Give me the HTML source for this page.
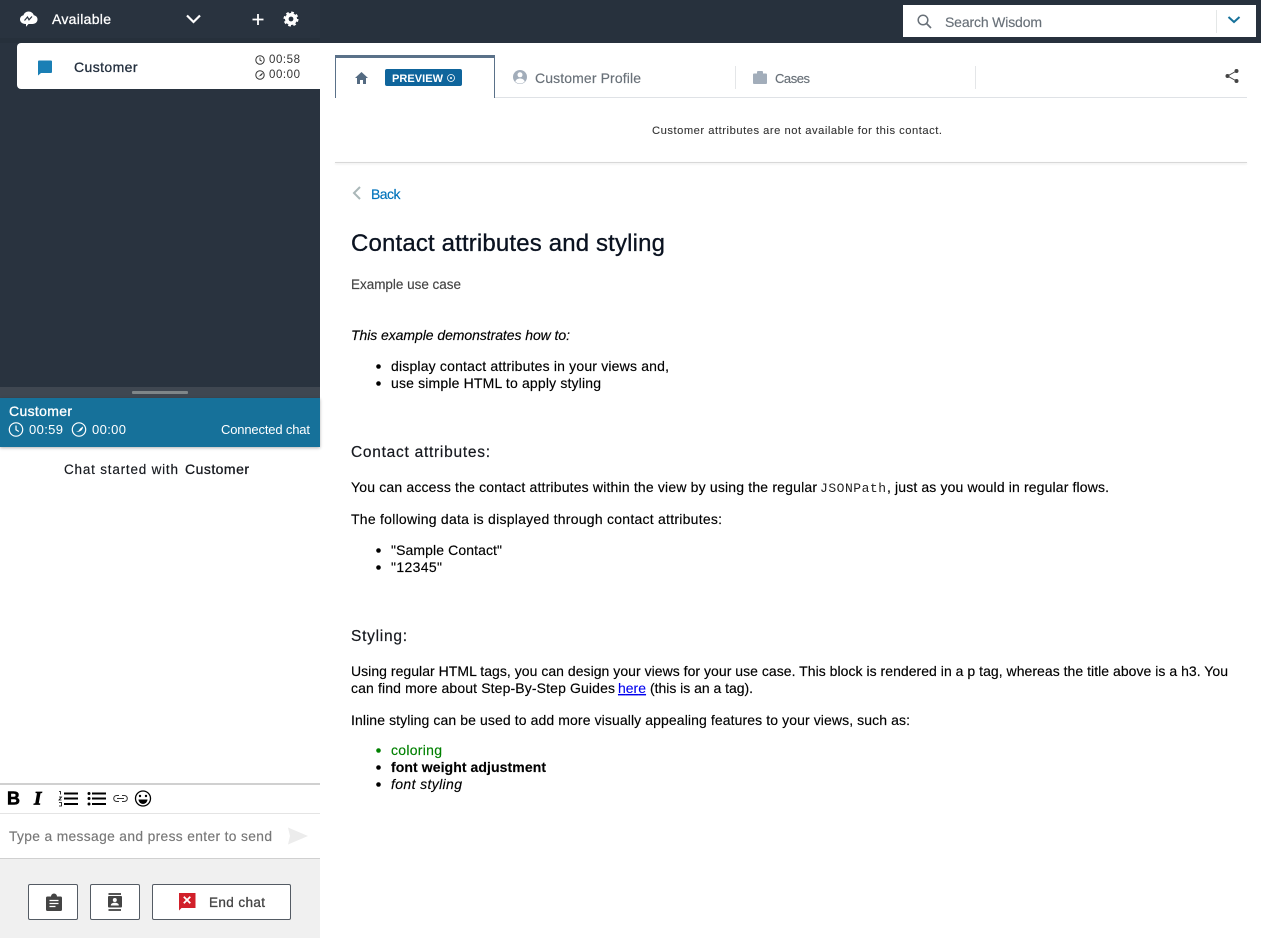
<!DOCTYPE html>
<html lang="en">
<head>
<meta charset="utf-8">
<title>Agent workspace</title>
<style>
html,body{margin:0;padding:0;background:#fff}
body{position:relative;width:1261px;height:938px;overflow:hidden;font-family:"Liberation Sans",sans-serif}
.b{position:absolute;box-sizing:border-box}
svg#t{position:absolute;left:0;top:0}
svg#t text{font-family:"Liberation Sans",sans-serif;white-space:pre}
.m{stroke-width:.3px;paint-order:stroke}
</style>
</head>
<body>
<!-- panels -->
<div class="b" style="left:0;top:0;width:1261px;height:43px;background:#27313d"></div>
<div class="b" style="left:0;top:0;width:320px;height:387px;background:#29333f"></div>
<div class="b" style="left:0;top:38px;width:320px;height:5px;background:#26303b"></div>
<div class="b" style="left:17px;top:43px;width:303px;height:46px;background:#fff;border-radius:4px 0 0 4px"></div>
<div class="b" style="left:903px;top:5px;width:353px;height:32px;background:#fff"></div>
<div class="b" style="left:1216px;top:10px;width:1px;height:23px;background:#e4e7e7"></div>
<div class="b" style="left:0;top:387px;width:320px;height:11px;background:#3f4751"></div>
<div class="b" style="left:132px;top:391px;width:56px;height:3px;background:#7f8689;border-radius:1px"></div>
<div class="b" style="left:0;top:398px;width:320px;height:49px;background:#16719a;box-shadow:0 1px 3px rgba(0,0,0,.3)"></div>
<div class="b" style="left:0;top:783px;width:320px;height:2px;background:#d0d0d0"></div>
<div class="b" style="left:0;top:813px;width:320px;height:1px;background:#e4e4e4"></div>
<div class="b" style="left:0;top:858px;width:320px;height:80px;background:#f0f0f0;border-top:1px solid #d0d0d0"></div>
<div class="b" style="left:28px;top:884px;width:50px;height:36px;background:#fff;border:1px solid #545b64;border-radius:2px"></div>
<div class="b" style="left:90px;top:884px;width:50px;height:36px;background:#fff;border:1px solid #545b64;border-radius:2px"></div>
<div class="b" style="left:152px;top:884px;width:139px;height:36px;background:#fff;border:1px solid #545b64;border-radius:2px"></div>
<!-- tabs -->
<div class="b" style="left:495px;top:97px;width:752px;height:1px;background:#dfe2e6"></div>
<div class="b" style="left:335px;top:55px;width:160px;height:43px;background:#fff;border:1px solid #5a7189;border-top:3px solid #5a7189;border-bottom:0"></div>
<div class="b" style="left:385px;top:69px;width:77px;height:17px;background:#0f659c;border-radius:2px"></div>
<div class="b" style="left:735px;top:66px;width:1px;height:23px;background:#e4e6e8"></div>
<div class="b" style="left:975px;top:66px;width:1px;height:23px;background:#e4e6e8"></div>
<div class="b" style="left:335px;top:162px;width:912px;height:1px;background:#d8d8d8;box-shadow:0 1px 2px rgba(0,0,0,.12)"></div>

<svg id="t" width="1261" height="938" viewBox="0 0 1261 938" xmlns="http://www.w3.org/2000/svg">
<!-- top bar icons -->
<path d="M25.500 24c-3 0-5.500-1.800-5.500-4.600 0-2.200 1.500-3.800 3.500-4.200.7-2.300 2.800-3.700 5-3.700 2.600 0 4.700 1.600 5.300 3.800 2 .3 3.700 1.800 3.700 4.100 0 2.700-2.200 4.600-5.200 4.600h-3.800l-2.500 2.700v-2.700z" fill="#fff"/>
<path d="M24.500 20.500l3-3.500 1.500 2.800 3-3.300" stroke="#29333f" stroke-width="1.200" fill="none"/>
<path d="M187 15.500l6.500 6.500 6.500-6.500" stroke="#fff" stroke-width="2.200" fill="none"/>
<path d="M258 14v11M252.500 19.500h11" stroke="#fff" stroke-width="1.800" fill="none"/>
<circle cx="291" cy="19" r="6" fill="#fff"/>
<circle cx="291" cy="19" r="6.500" fill="none" stroke="#fff" stroke-width="2" stroke-dasharray="2.700 2.400"/>
<circle cx="291" cy="19" r="2.400" fill="#29333f"/>
<text class="m" x="52" y="24" font-size="14" fill="#fff" stroke="#fff" textLength="59">Available</text>
<!-- search -->
<circle cx="923" cy="20" r="4.800" fill="none" stroke="#687078" stroke-width="1.500"/>
<path d="M926.500 23.500l4.500 4.500" stroke="#687078" stroke-width="1.700"/>
<text x="945" y="27" font-size="14" fill="#687078" stroke="#687078" stroke-width=".15" textLength="97">Search Wisdom</text>
<path d="M1228.500 17l5.500 5 5.500-5" stroke="#16719a" stroke-width="2" fill="none"/>
<!-- card -->
<path d="M38 61.500a1 1 0 0 1 1-1h12a1 1 0 0 1 1 1v10.500a1 1 0 0 1-1 1h-10l-3 2.500z" fill="#1a7fb5"/>
<text class="m" x="74" y="72" font-size="14" fill="#232f3e" stroke="#232f3e" textLength="63.500">Customer</text>
<circle cx="260" cy="60" r="4.200" fill="none" stroke="#333" stroke-width="1"/>
<path d="M260 57.500v2.700l1.800 1" stroke="#333" stroke-width=".9" fill="none"/>
<circle cx="260" cy="75" r="4.200" fill="none" stroke="#333" stroke-width="1"/>
<path d="M262.700 72.800c0 2-1.300 3.600-4.700 3.600 1.300-.3 2-1 2.300-1.600.3-.7 1.400-1.400 2.400-2z" fill="#333"/>
<text x="269" y="63" font-size="11.500" fill="#333" textLength="31">00:58</text>
<text x="269" y="78" font-size="11.500" fill="#333" textLength="31">00:00</text>
<!-- chat header -->
<text class="m" x="9" y="416" font-size="14" fill="#fff" stroke="#fff" textLength="63">Customer</text>
<circle cx="16" cy="429.500" r="6.700" fill="none" stroke="#fff" stroke-width="1.200"/>
<path d="M16 425.500v4.300l2.800 1.700" stroke="#fff" stroke-width="1.200" fill="none"/>
<text x="29" y="434" font-size="13" fill="#fff" textLength="34">00:59</text>
<circle cx="79" cy="429.500" r="6.700" fill="none" stroke="#fff" stroke-width="1.200"/>
<path d="M83 426.500c0 3-2 5.500-7 5.500 2-.5 3-1.500 3.500-2.500.5-1 2-2 3.500-3z" fill="#fff"/>
<text x="92" y="434" font-size="13" fill="#fff" textLength="34">00:00</text>
<text x="221" y="434" font-size="13" fill="#fff" textLength="89">Connected chat</text>
<text x="64" y="474" font-size="13.500" fill="#16191f" stroke="#16191f" stroke-width=".15" textLength="114">Chat started with</text>
<text class="m" x="185" y="474" font-size="14" fill="#16191f" stroke="#16191f" textLength="64">Customer</text>
<!-- toolbar -->
<text x="7" y="804.500" font-size="18" font-weight="bold" fill="#000" stroke="#000" stroke-width=".6" textLength="12">B</text>
<text x="34" y="804.500" font-size="19" font-weight="bold" font-style="italic" fill="#000" stroke="#000" stroke-width=".8" style="font-family:'Liberation Serif',serif">I</text>
<path d="M64 793.500h14M64 798.500h14M64 804h14" stroke="#000" stroke-width="2"/>
<path d="M59 791.500h1.500v3M59 797h2.500l-2.500 3h2.500M59 802.500h2.500v3.500h-2.500" stroke="#000" stroke-width=".8" fill="none"/>
<path d="M92 793.500h14M92 798.500h14M92 804h14" stroke="#000" stroke-width="2"/>
<circle cx="89" cy="793.500" r="1.500"/><circle cx="89" cy="798.500" r="1.500"/><circle cx="89" cy="804" r="1.500"/>
<path d="M119 795.500h-2.300a3 3 0 0 0 0 6h2.300M122 795.500h2.300a3 3 0 0 1 0 6h-2.300M117 798.500h7" stroke="#333" stroke-width="1" fill="none"/>
<circle cx="143" cy="798.500" r="7.500" fill="none" stroke="#000" stroke-width="1.300"/>
<circle cx="140" cy="796" r="1.200"/><circle cx="146" cy="796" r="1.200"/>
<path d="M138.500 799.500h9a4.500 4.500 0 0 1-9 0z" fill="#000"/>
<text x="9" y="841" font-size="13.800" fill="#777" stroke="#777" stroke-width=".15" textLength="263">Type a message and press enter to send</text>
<path d="M288 827.500l20 8.500-20 8.500 2-8.500z" fill="#ececec"/>
<!-- footer icons -->
<path d="M47.500 896.500h3.500a3 3 0 0 1 6 0h3.500a1.500 1.500 0 0 1 1.500 1.500v11.500a1.500 1.500 0 0 1-1.500 1.500h-13a1.500 1.500 0 0 1-1.500-1.500v-11.500a1.500 1.500 0 0 1 1.500-1.500z" fill="#444"/>
<path d="M49.500 900.500h9M49.500 903.500h9M49.500 906.500h6" stroke="#fff" stroke-width="1.200"/>
<rect x="108.500" y="893" width="12.500" height="2" fill="#555"/><rect x="108.500" y="909" width="12.500" height="2" fill="#555"/>
<rect x="108" y="896" width="14" height="11.500" rx="1" fill="#444"/>
<circle cx="114.800" cy="900" r="2" fill="#fff"/>
<path d="M110.800 905.500c0-2 1.800-2.700 4-2.700s4 .7 4 2.700z" fill="#fff"/>
<path d="M179 893h16.500v15h-14l-2.500 2.500z" fill="#d1202a"/>
<path d="M183.800 896.800l6.500 6.500M190.300 896.800l-6.500 6.500" stroke="#fff" stroke-width="1.800"/>
<text class="m" x="209" y="907" font-size="13.500" fill="#444" stroke="#444" textLength="56">End chat</text>
<!-- tabs -->
<path d="M355 78l6.500-6 6.500 6h-2v6h-3v-4h-3v4h-3v-6z" fill="#546b82"/>
<text x="392" y="82" font-size="11" font-weight="bold" fill="#fff" textLength="51">PREVIEW</text>
<circle cx="451" cy="78" r="3.500" fill="none" stroke="#fff" stroke-width=".8"/>
<circle cx="451" cy="78" r="1" fill="#fff"/>
<circle cx="520" cy="77" r="7" fill="#a2adba"/>
<circle cx="520" cy="74.800" r="2.500" fill="#fff"/>
<path d="M515.300 81.500c.7-2 2.500-3 4.700-3s4 1 4.700 3a6.500 6.500 0 0 1-9.400 0z" fill="#fff"/>
<text x="535" y="83" font-size="14" fill="#687078" stroke="#687078" stroke-width=".15" textLength="106">Customer Profile</text>
<path d="M753 74.500a1 1 0 0 1 1-1h3v-1.500a1 1 0 0 1 1-1h4a1 1 0 0 1 1 1v1.500h3a1 1 0 0 1 1 1v8.500a1 1 0 0 1-1 1h-12a1 1 0 0 1-1-1z" fill="#a2adba"/>
<text x="775" y="83" font-size="13" fill="#687078" stroke="#687078" stroke-width=".15" textLength="35">Cases</text>
<circle cx="1236.500" cy="71" r="2" fill="#444"/><circle cx="1227.500" cy="76" r="2" fill="#444"/><circle cx="1236.500" cy="81" r="2" fill="#444"/>
<path d="M1236.500 71l-9 5 9 5" stroke="#444" stroke-width="1" fill="none"/>
<text x="652" y="134" font-size="11.200" fill="#333" stroke="#333" stroke-width=".1" textLength="290">Customer attributes are not available for this contact.</text>
<!-- article -->
<path d="M360 187l-6 6 6 6" stroke="#aab7b8" stroke-width="2" fill="none"/>
<text x="371" y="199" font-size="14" fill="#0073bb" stroke="#0073bb" stroke-width=".15" textLength="29.500">Back</text>
<text x="351" y="251" font-size="24" fill="#0a1220" stroke="#0a1220" stroke-width=".3" textLength="314">Contact attributes and styling</text>
<text x="351" y="289" font-size="13.500" fill="#444" stroke="#444" stroke-width=".15" textLength="110">Example use case</text>
<g stroke="#000" stroke-width=".15">
<text x="351" y="340" font-size="14" font-style="italic" fill="#000" textLength="219">This example demonstrates how to:</text>
<text x="391" y="371" font-size="14" textLength="278">display contact attributes in your views and,</text>
<text x="391" y="388" font-size="14" textLength="210">use simple HTML to apply styling</text>
<text x="351" y="492" font-size="14" textLength="466">You can access the contact attributes within the view by using the regular</text>
<text x="887" y="492" font-size="14" textLength="222">, just as you would in regular flows.</text>
<text x="351" y="524" font-size="14" textLength="371">The following data is displayed through contact attributes:</text>
<text x="391" y="555" font-size="14" textLength="111">"Sample Contact"</text>
<text x="391" y="572" font-size="14" textLength="51">"12345"</text>
<text x="351" y="676" font-size="14" textLength="877">Using regular HTML tags, you can design your views for your use case. This block is rendered in a p tag, whereas the title above is a h3. You</text>
<text x="351" y="693" font-size="14" textLength="264">can find more about Step-By-Step Guides</text>
<text x="650" y="693" font-size="14" textLength="103">(this is an a tag).</text>
<text x="351" y="725" font-size="14" textLength="559">Inline styling can be used to add more visually appealing features to your views, such as:</text>
<text x="391" y="772" font-size="14" font-weight="bold" textLength="155">font weight adjustment</text>
<text x="391" y="789" font-size="14" font-style="italic" textLength="71">font styling</text>
</g>
<circle cx="378.500" cy="366.500" r="2.300"/><circle cx="378.500" cy="383.500" r="2.300"/>
<circle cx="378.500" cy="550.500" r="2.300"/><circle cx="378.500" cy="567.500" r="2.300"/>
<circle cx="378.500" cy="750.500" r="2.300" fill="#008000"/><circle cx="378.500" cy="767.500" r="2.300"/><circle cx="378.500" cy="784.500" r="2.300"/>
<text x="351" y="457" font-size="15.500" fill="#16191f" stroke="#16191f" stroke-width=".2" textLength="139">Contact attributes:</text>
<text x="820" y="492" font-size="13" style="font-family:'Liberation Mono',monospace" fill="#222" textLength="66">JSONPath</text>
<text x="351" y="641" font-size="15.500" fill="#16191f" stroke="#16191f" stroke-width=".2" textLength="56">Styling:</text>
<a href="#"><text x="618" y="693" font-size="14" fill="#0000ee" stroke="#0000ee" stroke-width=".1" text-decoration="underline" textLength="28">here</text></a>
<text x="391" y="755" font-size="14" fill="#008000" stroke="#008000" stroke-width=".15" textLength="51">coloring</text>
</svg>
</body>
</html>
